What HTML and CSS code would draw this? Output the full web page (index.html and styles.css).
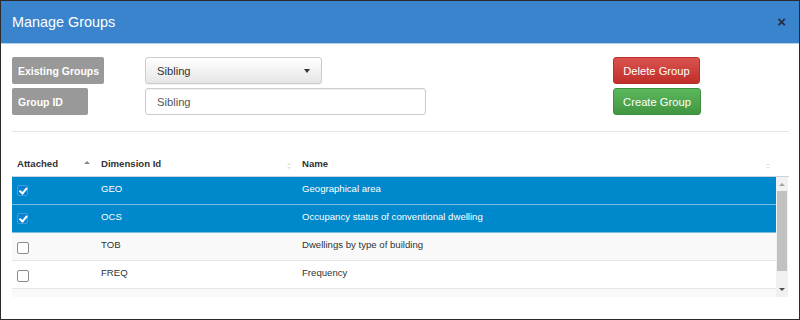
FILE: index.html
```html
<!DOCTYPE html>
<html lang="en">
<head>
    <meta charset="UTF-8">
    <title>Manage Groups</title>
    <link rel="stylesheet" href="styles.css">
</head>
<body>
    <div class="modal">
        <div class="modal-header">
            <h2 class="modal-title">Manage Groups</h2>
            <span class="close">&times;</span>
        </div>

        <div class="modal-body">
            <div class="group-form">
                <span class="label">Existing Groups</span>
                <div class="select">
                    <span>Sibling</span>
                    <span class="caret"></span>
                </div>
                <span></span>
                <button class="btn btn-danger">Delete Group</button>

                <span class="label">Group ID</span>
                <input class="text-input" type="text" value="Sibling">
                <span></span>
                <button class="btn btn-success">Create Group</button>
            </div>

            <div class="divider"></div>

            <div class="grid">
                <div class="grid-head">
                    <div class="col">Attached <span class="sort-up"></span></div>
                    <div class="col">Dimension Id <span class="sort-both"></span></div>
                    <div class="col">Name <span class="sort-both"></span></div>
                </div>
                <div class="grid-body">
                    <div class="rows">
                        <div class="row selected">
                            <div class="col"><span class="check on"></span></div>
                            <div class="col">GEO</div>
                            <div class="col">Geographical area</div>
                        </div>
                        <div class="row selected">
                            <div class="col"><span class="check on"></span></div>
                            <div class="col">OCS</div>
                            <div class="col">Occupancy status of conventional dwelling</div>
                        </div>
                        <div class="row alt">
                            <div class="col"><span class="check"></span></div>
                            <div class="col">TOB</div>
                            <div class="col">Dwellings by type of building</div>
                        </div>
                        <div class="row">
                            <div class="col"><span class="check"></span></div>
                            <div class="col">FREQ</div>
                            <div class="col">Frequency</div>
                        </div>
                        <div class="row alt">
                            <div class="col"><span class="check"></span></div>
                            <div class="col">TIME_PERIOD</div>
                            <div class="col">Time period</div>
                        </div>
                    </div>
                    <div class="scrollbar">
                        <span class="arrow-up"></span>
                        <span class="thumb"></span>
                        <span class="arrow-down"></span>
                    </div>
                </div>
            </div>
        </div>
    </div>
</body>
</html>
```

FILE: styles.css
```css
body {
    margin: 0;
    font-family: "Liberation Sans", Arial, sans-serif;
    color: #333;
    background: #fff;
}

.modal {
    width: 798px;
    height: 318px;
    border: 1px solid #2b2b2b;
    overflow: hidden;
    background: #fff;
}

.modal-header {
    height: 42px;
    background: #3a84ce;
    border-bottom: 1px solid #b5d0ec;
    display: flex;
    align-items: center;
    justify-content: space-between;
    padding: 0 11px;
}

.modal-title {
    margin: 0;
    font-size: 14.4px;
    font-weight: normal;
    color: #fff;
    padding-bottom: 1px;
}

.close {
    font-size: 15px;
    font-weight: bold;
    color: #1f2f40;
    line-height: 1;
    margin-right: 2px;
    margin-top: -2px;
}

.modal-body {
    padding: 13px 10px 0 11px;
}

.group-form {
    display: grid;
    grid-template-columns: 133px 281px 187px 88px;
    grid-auto-rows: 27px;
    row-gap: 4px;
    align-items: stretch;
}

.label {
    justify-self: start;
    background: #999;
    color: #fff;
    font-weight: bold;
    font-size: 10.5px;
    border-radius: 2px;
    padding: 0 5px 0 6px;
    display: flex;
    align-items: center;
    min-width: 65px;
}

.select {
    width: 177px;
    box-sizing: border-box;
    border: 1px solid #ccc;
    border-radius: 3px;
    background: linear-gradient(#fff, #e6e6e6);
    display: flex;
    align-items: center;
    justify-content: space-between;
    padding: 0 11px 0 11px;
    font-size: 11.2px;
    color: #333;
    box-shadow: 0 1px 1px rgba(0, 0, 0, 0.06);
}

.caret {
    width: 0;
    height: 0;
    border-left: 3.5px solid transparent;
    border-right: 3.5px solid transparent;
    border-top: 4px solid #333;
}

.text-input {
    box-sizing: border-box;
    width: 281px;
    margin: 0;
    border: 1px solid #ccc;
    border-radius: 3px;
    padding: 0 11px;
    font-family: inherit;
    font-size: 11.2px;
    color: #555;
    box-shadow: inset 0 1px 1px rgba(0, 0, 0, 0.06);
}

.btn {
    margin: 0;
    border-radius: 3px;
    font-family: inherit;
    font-size: 11.2px;
    color: #fff;
    padding: 0;
    cursor: pointer;
}

.btn-danger {
    width: 87px;
    background: linear-gradient(#d9534f, #c12e2a);
    border: 1px solid #b92c28;
}

.btn-success {
    width: 88px;
    background: linear-gradient(#5cb85c, #419641);
    border: 1px solid #3e8f3e;
}

.divider {
    height: 1px;
    background: #e5e5e5;
    margin: 16px 0 22px;
}

.grid {
    font-size: 9.6px;
}

.grid-head {
    display: grid;
    grid-template-columns: 84px 201px 479px;
    height: 22px;
    border-bottom: 1px solid #c9d3dd;
    font-weight: bold;
    color: #333;
}

.grid-head .col {
    display: flex;
    align-items: center;
    justify-content: space-between;
    padding: 0 4px 3px 5px;
}

.sort-up {
    width: 0;
    height: 0;
    border-left: 3px solid transparent;
    border-right: 3px solid transparent;
    border-bottom: 3px solid #888;
    margin-right: 2px;
    margin-top: -2px;
}

.sort-both {
    width: 0;
    height: 0;
    border-left: 2.5px solid transparent;
    border-right: 2.5px solid transparent;
    border-bottom: 2.5px solid #e2e2e2;
    position: relative;
    margin-right: 2px;
    margin-top: 1px;
}

.sort-both::after {
    content: "";
    position: absolute;
    left: -2.5px;
    top: 4px;
    border-left: 2.5px solid transparent;
    border-right: 2.5px solid transparent;
    border-top: 2.5px solid #e2e2e2;
}

.grid-body {
    display: flex;
    height: 120px;
    width: 776px;
}

.rows {
    width: 764px;
    overflow: hidden;
}

.row {
    display: grid;
    grid-template-columns: 84px 201px 479px;
    height: 27px;
    border-bottom: 1px solid #e6e6e6;
    background: #fff;
    color: #333;
}

.row.alt {
    background: #f9f9f9;
}

.row.selected {
    background: #0088cc;
    color: #fff;
    border-bottom-color: #7cbde2;
}

.row .col {
    display: flex;
    align-items: center;
    padding: 0 0 4px 5px;
    white-space: nowrap;
}

.check {
    box-sizing: border-box;
    width: 12px;
    height: 12px;
    border: 1px solid #8a8a8a;
    border-radius: 2px;
    background: #fff;
    margin-top: 6px;
}

.check.on {
    width: 11px;
    height: 11px;
    border-color: #3d9edb;
    background: #0a80cf;
    position: relative;
    margin-top: 4px;
}

.check.on::after {
    content: "";
    position: absolute;
    left: 3px;
    top: 0;
    width: 2.5px;
    height: 5.5px;
    border: solid #fff;
    border-width: 0 2px 2px 0;
    transform: rotate(40deg);
}

.scrollbar {
    width: 12px;
    background: #f1f1f1;
    display: flex;
    flex-direction: column;
    align-items: center;
}

.arrow-up {
    margin-top: 6px;
    width: 0;
    height: 0;
    border-left: 3px solid transparent;
    border-right: 3px solid transparent;
    border-bottom: 3px solid #a3a3a3;
}

.thumb {
    width: 10px;
    height: 80px;
    background: #c1c1c1;
    margin-top: 5px;
}

.arrow-down {
    margin-top: auto;
    margin-bottom: 6px;
    width: 0;
    height: 0;
    border-left: 3px solid transparent;
    border-right: 3px solid transparent;
    border-top: 3px solid #505050;
}
```
